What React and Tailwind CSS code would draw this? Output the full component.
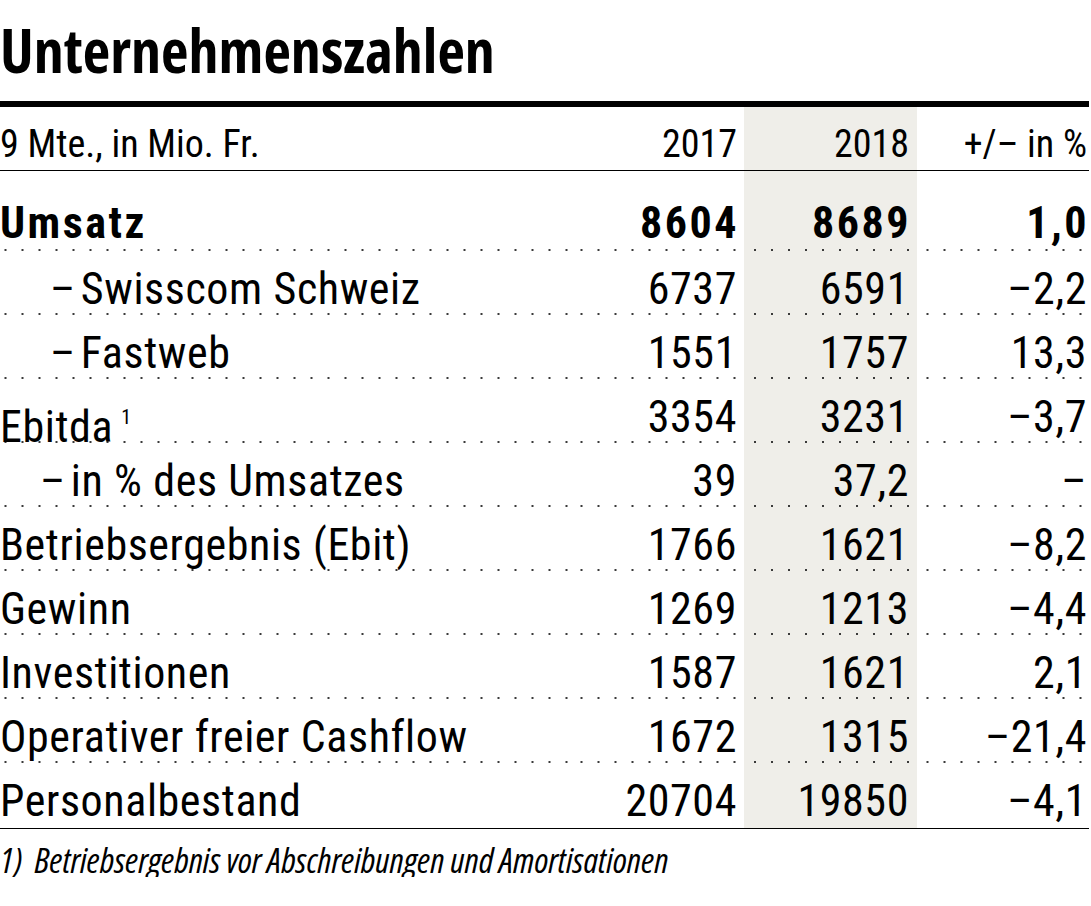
const rows = [
  { label: "Umsatz", a: "8604", b: "8689", c: "1,0", bold: true },
  { label: "Swisscom Schweiz", a: "6737", b: "6591", c: "–2,2", dash: "pl-[50px]" },
  { label: "Fastweb", a: "1551", b: "1757", c: "13,3", dash: "pl-[50px]" },
  { label: "Ebitda", a: "3354", b: "3231", c: "–3,7", note: "1" },
  { label: "in % des Umsatzes", a: "39", b: "37,2", c: "–", dash: "pl-[40px]" },
  { label: "Betriebsergebnis (Ebit)", a: "1766", b: "1621", c: "–8,2" },
  { label: "Gewinn", a: "1269", b: "1213", c: "–4,4" },
  { label: "Investitionen", a: "1587", b: "1621", c: "2,1" },
  { label: "Operativer freier Cashflow", a: "1672", b: "1315", c: "–21,4" },
  { label: "Personalbestand", a: "20704", b: "19850", c: "–4,1", last: true },
];

const dots =
  "bg-[linear-gradient(90deg,#3a3a3a_0_2px,transparent_2px)] bg-[length:17px_2px] bg-repeat-x bg-bottom";

export default function App() {
  return (
    <div className="w-[1089px] bg-white text-black">
      {/* TITEL */}
      <h1 className="h-[101px] font-['Open_Sans',sans-serif] text-[60px] leading-[100px] font-bold font-stretch-condensed">
        Unternehmenszahlen
      </h1>
      <div className="h-[6px] bg-black" />

      {/* KOPFZEILE */}
      <div className="grid grid-cols-[1fr_174px_173px_172px] border-b-[1.5px] border-black font-['Roboto',sans-serif] text-[38px] leading-[48px] font-stretch-condensed">
        <div className="h-[63px] pt-[13px]">9 Mte., in Mio. Fr.</div>
        <div className="h-[63px] pt-[13px] pr-[7px] text-right">2017</div>
        <div className="h-[63px] pt-[13px] pr-[8px] text-right bg-[#efeee9]">2018</div>
        <div className="h-[63px] pt-[13px] pr-[2px] text-right">+/– in %</div>
      </div>

      {/* ZEILEN */}
      <div className="border-b-[1.5px] border-black">
        {rows.map((r, i) => {
          const h = r.bold ? "h-[80px] pt-[24px]" : r.last ? "h-[65px] pt-[10px]" : "h-[64px] pt-[10px]";
          const d = r.last ? "" : dots;
          return (
            <div
              key={i}
              className={`grid grid-cols-[1fr_174px_173px_172px] font-['Roboto',sans-serif] text-[44px] leading-[56px] font-stretch-condensed ${
                r.bold ? "font-bold tracking-[2.5px]" : "font-normal tracking-[0.6px]"
              }`}
            >
              <div className={`${h} ${d} ${r.dash || ""} whitespace-nowrap`}>
                {r.dash && <span className="mr-[5px]">–</span>}
                {r.label}
                {r.note && <span className="ml-[8px] text-[20px] align-[18px]">{r.note}</span>}
              </div>
              <div className={`${h} ${d} ${r.bold ? "pr-[5px]" : "pr-[7px]"} text-right`}>{r.a}</div>
              <div className={`${h} ${d} ${r.bold ? "pr-[6px]" : "pr-[8px]"} text-right bg-[#efeee9]`}>{r.b}</div>
              <div className={`${h} ${d} ${r.bold ? "pr-0" : "pr-[2px]"} text-right`}>{r.c}</div>
            </div>
          );
        })}
      </div>

      {/* FUSSNOTE */}
      <p className="pt-[14px] font-['Open_Sans',sans-serif] text-[35px] leading-[34px] italic font-stretch-condensed">
        <span className="mr-[12px]">1)</span>Betriebsergebnis vor Abschreibungen und Amortisationen
      </p>
    </div>
  );
}
